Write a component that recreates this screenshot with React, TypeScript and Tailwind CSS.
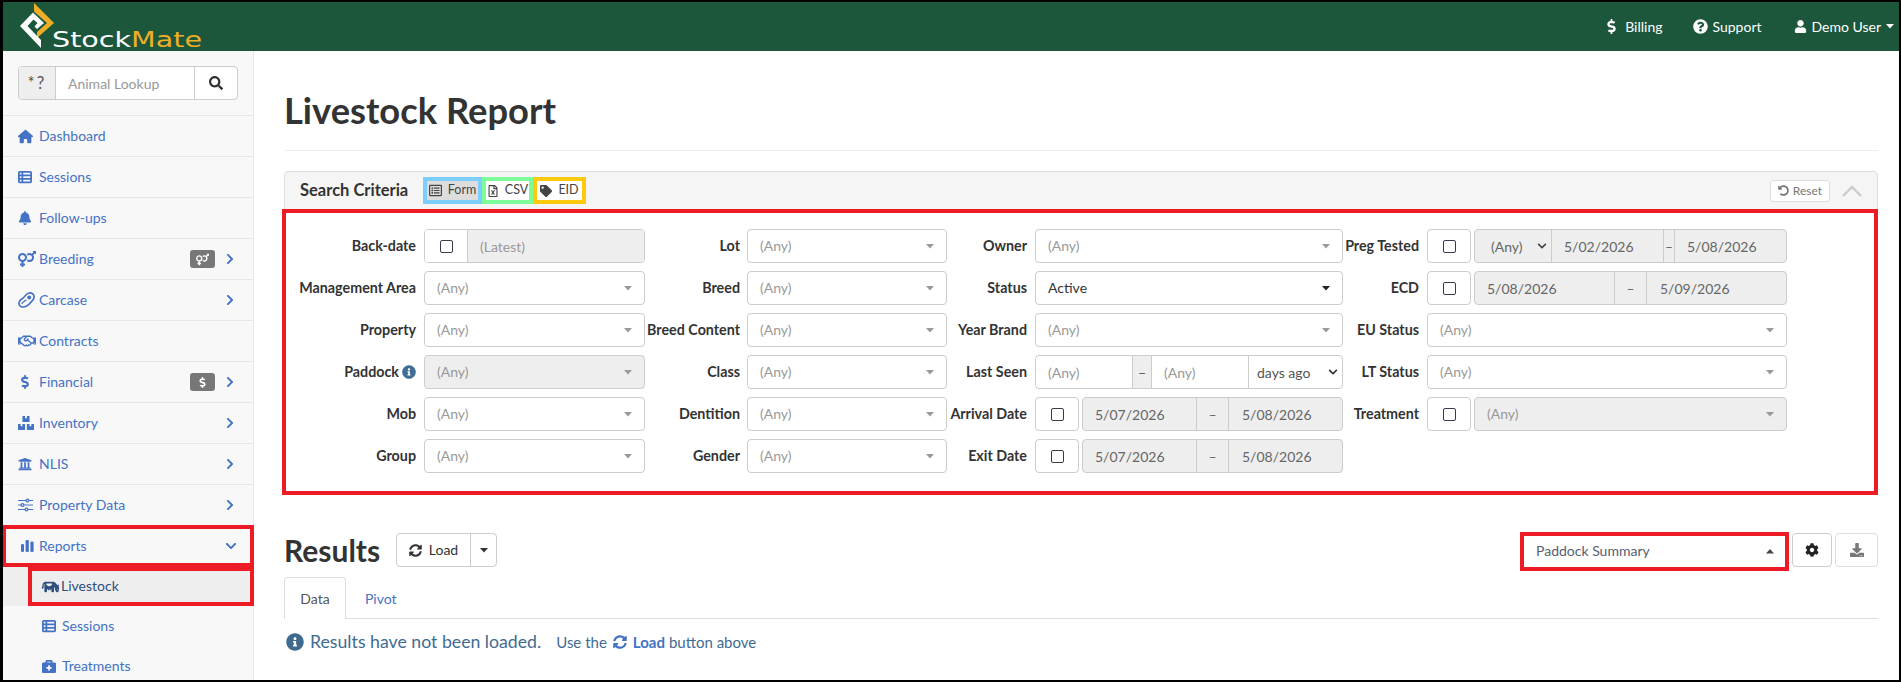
import React from "react";
import {
  FaVenusMars, FaRegHandshake, FaDollarSign, FaBoxes, FaUniversity,
  FaBriefcaseMedical, FaSearch, FaQuestionCircle, FaUser, FaInfoCircle, FaRegListAlt, FaRegFileExcel, FaTag,
  FaUndoAlt, FaSyncAlt, FaCog, FaDownload, FaChevronRight, FaChevronDown,
} from "react-icons/fa";
import { FaCow, FaHouse, FaTableList, FaBell } from "react-icons/fa6";

const Caret = ({ up, cls }: { up?: boolean; cls: string }) => (
  <svg width="8" height="5" viewBox="0 0 8 5" className={cls}>
    <path d={up ? "M0 4.5 L4 0 L8 4.5 Z" : "M0 0 L8 0 L4 4.5 Z"} fill="currentColor" />
  </svg>
);

const Steak = () => (
  <svg width="17" height="16" viewBox="0 0 17 16" fill="none">
    <path d="M11 1C14 .4 16.4 2.4 16 5.6 15.7 8 13.6 9.4 12 11.2 10 13.6 7.6 15 4.8 15 2.2 15 .8 13 1 10.8 1.2 8.4 3 7.4 4.6 6.4 7 4.8 8 1.6 11 1Z" stroke="currentColor" strokeWidth="1.7" />
    <path d="M4 11.6C4.6 9.8 6.6 9.4 8 8.2" stroke="currentColor" strokeWidth="1.3" strokeLinecap="round" />
    <circle cx="11.2" cy="5.6" r="2" fill="currentColor" />
  </svg>
);

const Bars = () => (
  <svg width="13" height="12" viewBox="0 0 13 12" fill="currentColor">
    <rect x="0" y="4" width="3" height="8" rx="1.2" />
    <rect x="4.6" y="0" width="3.2" height="12" rx="1.2" />
    <rect x="9.4" y="1.5" width="3.2" height="10.5" rx="1.2" />
  </svg>
);

const Sliders = () => (
  <svg width="15" height="14" viewBox="0 0 15 14" fill="none" stroke="currentColor">
    <path d="M0 2.5H8M11 2.5H15M0 7H3M6 7H15M0 11.5H7M10 11.5H15" strokeWidth="1.2" />
    <circle cx="9.5" cy="2.5" r="1.4" strokeWidth="1.2" />
    <circle cx="4.5" cy="7" r="1.4" strokeWidth="1.2" />
    <circle cx="8.5" cy="11.5" r="1.4" strokeWidth="1.2" />
  </svg>
);

const Logo = () => (
  <svg width="40" height="48" viewBox="0 0 40 48" className="shrink-0">
    <path d="M16 1 L36 21 L19 36 L19 30 L29 21 L16 9.5 Z" fill="#eeaf26" />
    <path d="M15 10.5 L26 21 L19 27 L16.5 24.5 L19.5 21 L15.5 17.5 L9.5 24 L23 38 L23 46 L2 24 Z" fill="#ffffff" />
  </svg>
);

const Check = () => <span className="block w-[13px] h-[13px] border-[1.5px] border-[#3a3a4a] rounded-[2px] bg-white" />;

const CheckBox = ({ cls }: { cls: string }) => (
  <div className={`${cls} h-[34px] shrink-0 border border-[#ccc] rounded-[4px] bg-white flex items-center justify-center`}>
    <Check />
  </div>
);

const Select = ({ value = "(Any)", disabled, active, cls = "" }: { value?: string; disabled?: boolean; active?: boolean; cls?: string }) => (
  <div className={`${cls} h-[34px] border border-[#ccc] rounded-[4px] flex items-center pl-3 pr-3 ${disabled ? "bg-[#eeeeee]" : "bg-white"}`}>
    <span className={`flex-1 pb-[2px] ${active ? "text-[#333]" : "text-[#999]"}`}>{value}</span>
    <Caret cls={active ? "text-[#222]" : "text-[#999]"} />
  </div>
);

const Row = ({ label, labelCls, children }: { label: React.ReactNode; labelCls: string; children?: React.ReactNode }) => (
  <div className="h-[34px] flex items-center">
    <div className={`${labelCls} shrink-0 pb-[1px] font-bold text-[14.3px] text-[#333] text-right whitespace-nowrap flex justify-end items-center`}>{label}</div>
    {children}
  </div>
);

const DateRange = ({ a, b, cls, aw, addon, aPad }: { a: string; b: string; cls: string; aw: string; addon: string; aPad: string }) => (
  <div className={`${cls} h-[34px] border border-[#ccc] rounded-[4px] bg-[#eeeeee] flex items-center text-[#666]`}>
    <div className={`${aw} pl-3 h-full flex items-center`}>{a}</div>
    <div className={`${addon} h-full flex items-center justify-center border-x border-[#ccc]`}>–</div>
    <div className={`flex-1 ${aPad} h-full flex items-center`}>{b}</div>
  </div>
);

const NavRow = ({ icon, label, badge, chevron }: { icon: React.ReactNode; label: string; badge?: React.ReactNode; chevron?: boolean }) => (
  <div className="h-[41px] border-b border-[#e7e7e7] flex items-center pl-[15px] text-[#4472c4]">
    <span className="w-[21px] shrink-0 flex items-center justify-start">{icon}</span>
    <span className="flex-1 pb-[2px]">{label}</span>
    {badge && <span className="w-[25px] h-[18px] rounded-[3px] bg-[#777] text-white text-[12px] flex items-center justify-center">{badge}</span>}
    {chevron && <FaChevronRight className="text-[12px] ml-[9px] mr-[17px]" />}
  </div>
);

const TabBtn = ({ border, bg, icon, label }: { border: string; bg: string; icon: React.ReactNode; label: string }) => (
  <div className={`${border} ${bg} h-[27px] border-4 flex items-center justify-center gap-[6px] text-[12.5px] text-[#444]`}>
    {icon}
    <span>{label}</span>
  </div>
);

const l1 = "w-[116px] mr-2";
const l2 = "w-[95px] mr-[7px]";
const l3 = "w-[80px] mr-2";
const l4 = "w-[76px] mr-2";
const i1 = "w-[221px]";
const i2 = "w-[200px]";
const i3 = "w-[308px]";
const i4 = "w-[360px]";

export default function App() {
  return (
    <div className="w-[1901px] h-[682px] overflow-hidden bg-white border-t-2 border-r-2 border-b-2 border-l-[3px] border-black text-[14px] text-[#333] font-['Lato','Liberation_Sans',sans-serif] flex flex-col">
      <header className="h-[49px] shrink-0 bg-[#1c573c] flex items-center text-white overflow-hidden">
        <div className="ml-[15px] flex items-start h-full relative">
          <Logo />
          <span className="mt-[25px] -ml-[6px] text-[21px] leading-[26px] font-['DejaVu_Sans',sans-serif] scale-x-[1.36] origin-left whitespace-nowrap">
            Stock<span className="text-[#eeaf26]">Mate</span>
          </span>
        </div>
        <nav className="ml-auto flex items-center pr-[5px]">
          <span className="flex items-center gap-[6px]"><FaDollarSign className="text-[15px]" />Billing</span>
          <span className="flex items-center gap-[4px] ml-[31px]"><FaQuestionCircle className="text-[15px]" />Support</span>
          <span className="flex items-center gap-[5px] ml-[32px]"><FaUser className="text-[13px]" />Demo User<Caret cls="text-white" /></span>
        </nav>
      </header>

      <div className="flex-1 flex min-h-0">
        <aside className="w-[251px] shrink-0 bg-[#f8f8f8] border-r border-[#e7e7e7]">
          <div className="h-[65px] border-b border-[#e7e7e7] pt-[15px] pl-[15px]">
            <div className="w-[220px] h-[34px] border border-[#ccc] rounded-[4px] flex bg-white overflow-hidden">
              <div className="w-[37px] bg-[#eeeeee] border-r border-[#ccc] flex items-center justify-center text-[#555] text-[17px] tracking-[2px]">*?</div>
              <div className="flex-1 flex items-center pl-3 text-[#999]">Animal Lookup</div>
              <div className="w-[43px] border-l border-[#ccc] flex items-center justify-center text-[#333]"><FaSearch className="text-[14px]" /></div>
            </div>
          </div>
          <NavRow icon={<FaHouse className="text-[15px]" />} label="Dashboard" />
          <NavRow icon={<FaTableList className="text-[14px]" />} label="Sessions" />
          <NavRow icon={<FaBell className="text-[14px]" />} label="Follow-ups" />
          <NavRow icon={<FaVenusMars className="text-[18px]" />} label="Breeding" badge={<FaVenusMars className="text-[13px]" />} chevron />
          <NavRow icon={<Steak />} label="Carcase" chevron />
          <NavRow icon={<FaRegHandshake className="text-[18px]" />} label="Contracts" />
          <NavRow icon={<span className="w-[14px] flex justify-center"><FaDollarSign className="text-[14px]" /></span>} label="Financial" badge={<FaDollarSign className="text-[11px]" />} chevron />
          <NavRow icon={<FaBoxes className="text-[16px]" />} label="Inventory" chevron />
          <NavRow icon={<FaUniversity className="text-[14px]" />} label="NLIS" chevron />
          <NavRow icon={<Sliders />} label="Property Data" chevron />
          <div className="h-[42px] -mt-[1px] -ml-[1px] -mr-[1px] border-4 border-[#ed1c24] flex items-center pl-[15px] text-[#4472c4]">
            <span className="w-[18px] shrink-0"><Bars /></span>
            <span className="flex-1 pb-[2px]">Reports</span>
            <FaChevronDown className="text-[12px] mr-[13px]" />
          </div>
          <div className="h-[39px] -mr-[1px] bg-[#eeeeee] pl-[25px]">
            <div className="h-full border-4 border-[#ed1c24] flex items-center pl-[9px] text-[#2f4f7f]">
              <FaCow className="text-[14px] w-[19px] mr-[1px]" />
              <span className="pb-[2px]">Livestock</span>
            </div>
          </div>
          <div className="h-[40px] flex items-center pl-[39px] text-[#4472c4]">
            <span className="w-[20px]"><FaTableList className="text-[14px]" /></span><span className="pb-[2px]">Sessions</span>
          </div>
          <div className="h-[40px] flex items-center pl-[39px] text-[#4472c4]">
            <span className="w-[20px]"><FaBriefcaseMedical className="text-[14px]" /></span><span className="pb-[2px]">Treatments</span>
          </div>
        </aside>

        <main className="flex-1 min-w-0 pl-[30px] pr-[21px] pt-[40px]">
          <h1 className="h-[40px] leading-[38px] text-[36.3px] font-bold text-[#333]">Livestock Report</h1>
          <div className="mt-[19px] h-px bg-[#eeeeee]" />
          <section className="mt-[20px]">
            <div className="h-[39px] bg-[#f5f5f5] border border-[#ddd] rounded-t-[4px] flex items-center pl-[15px] pr-[15px]">
              <span className="w-[123px] font-bold text-[16.5px] text-[#333]">Search Criteria</span>
              <TabBtn border="border-[#7ccffc] w-[59px]" bg="bg-[#dddddd]" icon={<FaRegListAlt className="text-[13px]" />} label="Form" />
              <TabBtn border="border-[#7dfc9a] w-[51px]" bg="bg-white" icon={<FaRegFileExcel className="text-[12px]" />} label="CSV" />
              <TabBtn border="border-[#ffc90e] w-[53px]" bg="bg-white" icon={<FaTag className="text-[12px]" />} label="EID" />
              <div className="ml-auto w-[60px] h-[22px] border border-[#ddd] rounded-[3px] bg-white flex items-center justify-center gap-[4px] text-[12px] text-[#777]">
                <FaUndoAlt className="text-[11px]" />Reset
              </div>
              <svg width="20" height="12" viewBox="0 0 20 12" className="ml-[12px] text-[#ccc]" fill="none">
                <path d="M1 11 L10 2 L19 11" stroke="currentColor" strokeWidth="2.4" />
              </svg>
            </div>
            <div className="-mt-px -ml-[2px] border-4 border-[#ed1c24] pt-[16px] pb-[18px] pl-[14px] flex bg-white">
              <div className="flex flex-col gap-2">
                <Row label="Back-date" labelCls={l1}>
                  <div className={`${i1} h-[34px] border border-[#ccc] rounded-[4px] flex overflow-hidden`}>
                    <div className="w-[43px] border-r border-[#ccc] bg-white flex items-center justify-center"><Check /></div>
                    <div className="flex-1 bg-[#eeeeee] flex items-center pl-3 text-[#999]">(Latest)</div>
                  </div>
                </Row>
                <Row label="Management Area" labelCls={l1}><Select cls={i1} /></Row>
                <Row label="Property" labelCls={l1}><Select cls={i1} /></Row>
                <Row label={<>Paddock<FaInfoCircle className="ml-[3px] text-[14px] text-[#3e6d96]" /></>} labelCls={l1}><Select cls={i1} disabled /></Row>
                <Row label="Mob" labelCls={l1}><Select cls={i1} /></Row>
                <Row label="Group" labelCls={l1}><Select cls={i1} /></Row>
              </div>
              <div className="flex flex-col gap-2">
                <Row label="Lot" labelCls={l2}><Select cls={i2} /></Row>
                <Row label="Breed" labelCls={l2}><Select cls={i2} /></Row>
                <Row label="Breed Content" labelCls={l2}><Select cls={i2} /></Row>
                <Row label="Class" labelCls={l2}><Select cls={i2} /></Row>
                <Row label="Dentition" labelCls={l2}><Select cls={i2} /></Row>
                <Row label="Gender" labelCls={l2}><Select cls={i2} /></Row>
              </div>
              <div className="flex flex-col gap-2">
                <Row label="Owner" labelCls={l3}><Select cls={i3} /></Row>
                <Row label="Status" labelCls={l3}><Select cls={i3} value="Active" active /></Row>
                <Row label="Year Brand" labelCls={l3}><Select cls={i3} /></Row>
                <Row label="Last Seen" labelCls={l3}>
                  <div className={`${i3} h-[34px] border border-[#ccc] rounded-[4px] flex bg-white text-[#999] overflow-hidden`}>
                    <div className="w-[96px] pl-3 flex items-center">(Any)</div>
                    <div className="w-[20px] bg-[#eeeeee] border-x border-[#ccc] flex items-center justify-center text-[#555]">–</div>
                    <div className="w-[96px] pl-3 flex items-center">(Any)</div>
                    <div className="flex-1 border-l border-[#ccc] pl-2 pr-[4px] flex items-center justify-between text-[#555]">
                      days ago<FaChevronDown className="text-[10px] text-[#333]" />
                    </div>
                  </div>
                </Row>
                <Row label="Arrival Date" labelCls={l3}>
                  <CheckBox cls="w-[44px] mr-[3px]" />
                  <DateRange a="5/07/2026" b="5/08/2026" cls="w-[261px]" aw="w-[113px]" addon="w-[33px]" aPad="pl-[13px]" />
                </Row>
                <Row label="Exit Date" labelCls={l3}>
                  <CheckBox cls="w-[44px] mr-[3px]" />
                  <DateRange a="5/07/2026" b="5/08/2026" cls="w-[261px]" aw="w-[113px]" addon="w-[33px]" aPad="pl-[13px]" />
                </Row>
              </div>
              <div className="flex flex-col gap-2">
                <Row label="Preg Tested" labelCls={l4}>
                  <CheckBox cls="w-[44px] mr-[3px]" />
                  <div className="w-[313px] h-[34px] border border-[#ccc] rounded-[4px] bg-[#eeeeee] flex text-[#666]">
                    <div className="w-[77px] pl-4 pr-[4px] flex items-center justify-between border-r border-[#ccc]">(Any)<FaChevronDown className="text-[10px] text-[#444]" /></div>
                    <div className="w-[111px] pl-3 flex items-center">5/02/2026</div>
                    <div className="w-[12px] border-x border-[#ccc] flex items-center justify-center">–</div>
                    <div className="flex-1 pl-3 flex items-center">5/08/2026</div>
                  </div>
                </Row>
                <Row label="ECD" labelCls={l4}>
                  <CheckBox cls="w-[44px] mr-[3px]" />
                  <DateRange a="5/08/2026" b="5/09/2026" cls="w-[313px]" aw="w-[139px]" addon="w-[33px]" aPad="pl-[13px]" />
                </Row>
                <Row label="EU Status" labelCls={l4}><Select cls={i4} /></Row>
                <Row label="LT Status" labelCls={l4}><Select cls={i4} /></Row>
                <Row label="Treatment" labelCls={l4}>
                  <CheckBox cls="w-[44px] mr-[3px]" />
                  <Select cls="w-[313px]" disabled />
                </Row>
              </div>
            </div>
          </section>

          <section className="mt-[38px] h-[34px] flex items-start">
            <h2 className="h-[34px] leading-[34px] text-[30px] font-bold text-[#333] w-[112px]">Results</h2>
            <div className="w-[101px] h-[34px] border border-[#ccc] rounded-[4px] flex text-[#333]">
              <div className="w-[74px] flex items-center justify-center gap-[7px] border-r border-[#ccc]"><FaSyncAlt className="text-[13px]" /><span className="pb-[2px]">Load</span></div>
              <div className="flex-1 flex items-center justify-center"><Caret cls="text-[#333]" /></div>
            </div>
            <div className="ml-auto -mt-px mr-[3px] w-[269px] h-[39px] border-4 border-[#ed1c24] flex items-center pl-[12px] pr-[11px] text-[#556070]">
              <span className="flex-1 pb-[2px]">Paddock Summary</span>
              <Caret up cls="text-[#444]" />
            </div>
            <div className="w-[40px] h-[34px] border border-[#ccc] rounded-[4px] flex items-center justify-center text-[#222]"><FaCog className="text-[14px]" /></div>
            <div className="ml-[3px] w-[43px] h-[34px] border border-[#ddd] rounded-[4px] flex items-center justify-center text-[#777]"><FaDownload className="text-[14px]" /></div>
          </section>

          <div className="mt-[10px] h-[42px] border-b border-[#ddd] flex">
            <div className="h-[42px] w-[62px] border border-b-0 border-[#ddd] rounded-t-[4px] bg-white flex items-center justify-center text-[#555]">Data</div>
            <div className="h-[42px] ml-[3px] px-4 flex items-center text-[#4472c4]">Pivot</div>
          </div>

          <div className="mt-[11px] ml-[2px] h-[24px] flex items-center text-[#3f6b91]">
            <FaInfoCircle className="text-[18px]" />
            <span className="ml-[6px] text-[17.7px]">Results have not been loaded.</span>
            <span className="ml-[15px] flex items-center text-[15px]">
              Use the
              <FaSyncAlt className="text-[14px] mx-[6px] text-[#4472c4]" />
              <b className="text-[#4472c4]">Load</b>
              <span className="ml-[4px]">button above</span>
            </span>
          </div>
        </main>
      </div>
    </div>
  );
}
